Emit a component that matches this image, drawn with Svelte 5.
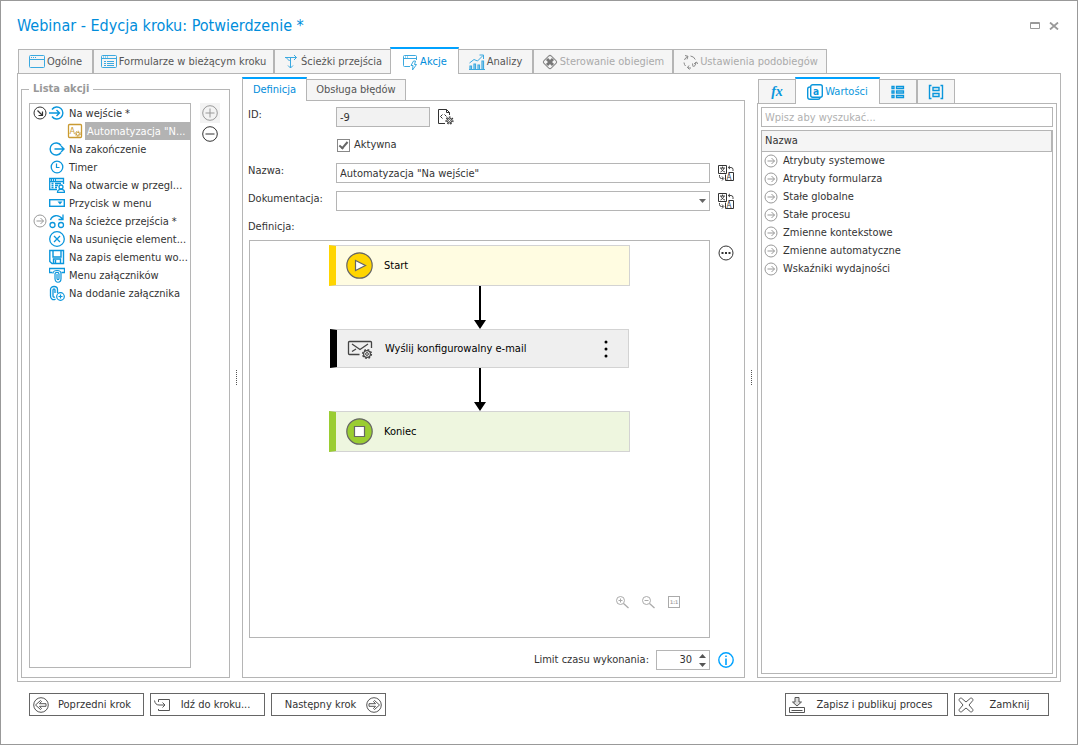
<script lang="ts">
  type Tab = { label: string; icon: string; width: number; active?: boolean; disabled?: boolean };
  type Action = { label: string; icon: string; expand?: string; child?: boolean };

  const tabs: Tab[] = [
    { label: 'Ogólne', icon: 'window', width: 75 },
    { label: 'Formularze w bieżącym kroku', icon: 'form', width: 181 },
    { label: 'Ścieżki przejścia', icon: 'paths', width: 117 },
    { label: 'Akcje', icon: 'action', width: 69, active: true },
    { label: 'Analizy', icon: 'chart', width: 75 },
    { label: 'Sterowanie obiegiem', icon: 'flow', width: 140, disabled: true },
    { label: 'Ustawienia podobiegów', icon: 'cycle', width: 154, disabled: true },
  ];

  const actions: Action[] = [
    { label: 'Na wejście *', icon: 'enter', expand: 'open' },
    { label: 'Automatyzacja "N...', icon: 'automation', child: true },
    { label: 'Na zakończenie', icon: 'exit' },
    { label: 'Timer', icon: 'timer' },
    { label: 'Na otwarcie w przegl...', icon: 'browser' },
    { label: 'Przycisk w menu', icon: 'menu' },
    { label: 'Na ścieżce przejścia *', icon: 'path', expand: 'closed' },
    { label: 'Na usunięcie element...', icon: 'remove' },
    { label: 'Na zapis elementu wo...', icon: 'save' },
    { label: 'Menu załączników', icon: 'clip' },
    { label: 'Na dodanie załącznika', icon: 'clipadd' },
  ];

  const values = [
    'Atrybuty systemowe',
    'Atrybuty formularza',
    'Stałe globalne',
    'Stałe procesu',
    'Zmienne kontekstowe',
    'Zmienne automatyczne',
    'Wskaźniki wydajności',
  ];

  let selected = $state(1);
  let enabled = $state(true);
  let name = $state('Automatyzacja "Na wejście"');
  let limit = $state(30);
  let search = $state('');
</script>

{#snippet gear(cx: number, cy: number, r: number)}
  <circle {cx} {cy} {r} fill="#fff" stroke-width="1" />
  <circle {cx} {cy} r={r + 1} fill="none" stroke-width="1.2" stroke-dasharray="1.6 1.5" />
  <circle {cx} {cy} r="1" fill="none" stroke-width=".8" />
{/snippet}

{#snippet icon(kind: string)}
  <svg class="icon" viewBox="0 0 16 16" fill="none" stroke="currentColor" aria-hidden="true">
    {#if kind === 'window'}
      <rect x=".5" y="1.5" width="15" height="12" rx="1" />
      <path d="M1 5.5h14M2 3.5h1M4 3.5h1M6 3.5h1" />
    {:else if kind === 'form'}
      <rect x=".5" y="1.5" width="15" height="12" rx="1" />
      <path d="M1 4.5h14M2 3h1M4 3h1M6 3h1M3 7.5h2M3 9.5h2M3 11.5h2M6 7.5h7M6 9.5h7M6 11.5h7" />
    {:else if kind === 'paths'}
      <path d="M2 3.5h11.5M11 1l2.500 2.5L11 6M2 3.5c1.500 0 2 .5 2.500 1.500S6 6.500 7.500 6.500M7.500 3.500v10.500M5 11.500L7.500 14l2.500-2.500" />
    {:else if kind === 'action'}
      <path d="M8 12.500H2.500a1 1 0 0 1-1-1v-9a1 1 0 0 1 1-1h11a1 1 0 0 1 1 1V6M2 4.500h12M3 3h1M5 3h1" />
      <path d="M11.500 7L9 11.500h2L10.500 16l4-5.500h-2l1-3.500z" />
    {:else if kind === 'chart'}
      <path d="M1 16v-4h1.500v4M5 16v-6h1.500v6M9 16v-5h1.500v5M13 16V7h1.500v9M0 15.500h16" stroke-width="1.2" />
      <path d="M.5 9L5 5.500l3.500 1.500L14 1.500M10.500 1h4v4" />
    {:else if kind === 'flow'}
      <rect x="2.800" y="2.800" width="10.400" height="10.400" rx="2" transform="rotate(45 8 8)" />
      <path d="M5 5l6 6M11 5l-6 6" stroke="#777" stroke-width="3" />
    {:else if kind === 'cycle'}
      <path d="M2.500 6a6 6 0 0 1 3-3.500M8.500 2a6 6 0 0 1 4.800 3.500M14 8a6 6 0 0 1-2.500 5M9 14a6 6 0 0 1-3.500-.5M3.500 12A6 6 0 0 1 2 8.500" />
      <path d="M3 1.500l3 .8-1 3M11 12.500l-.5-3M12 10l2.500-2 1.500 2M7 11.500l-1.500 2 2 2" />
    {:else if kind === 'enter'}
      <path d="M3 4.500a6 6 0 1 1 0 7M0 8h10.500M7.500 5l3 3-3 3" stroke-width="1.400" />
    {:else if kind === 'exit'}
      <path d="M12 4.500a6 6 0 1 0 0 7M5.500 8H15M12 5l3 3-3 3" stroke-width="1.400" />
    {:else if kind === 'automation'}
      <rect x="1.500" y="1.500" width="13" height="13" rx="1" stroke-width="1.300" />
      <text x="2.500" y="11" font-size="9" fill="currentColor" stroke="none">A</text>
      <circle cx="10.800" cy="10.800" r="1.600" />
      <circle cx="10.800" cy="10.800" r="2.600" stroke-dasharray="1.100 .95" />
    {:else if kind === 'timer'}
      <circle cx="8" cy="8" r="5.800" stroke-width="1.300" />
      <path d="M7.500 4.500v4h3" stroke-width="1.200" />
    {:else if kind === 'browser'}
      <path d="M8 12.500H.7v-11h13.800V7M.7 4.500h13.800M2 3h1M4 3h1M6 3h1M2.500 6.500h2M6 6.500h6M2.500 8.500h2M6 8.500h3M2.500 10.500h2M6 10.500h2" stroke-width="1.300" />
      <circle cx="12" cy="10" r="2" stroke-width="1.300" />
      <path d="M8.500 15.300c0-2 1.500-3 3.500-3s3.500 1 3.500 3z" stroke-width="1.300" />
    {:else if kind === 'menu'}
      <rect x=".7" y="4.700" width="14.600" height="6.600" stroke-width="1.400" />
      <path d="M8.500 6.500h5L11 9.500z" fill="currentColor" stroke="none" />
    {:else if kind === 'path'}
      <circle cx="3.500" cy="12" r="2.500" stroke-width="1.300" />
      <circle cx="12" cy="12" r="2.500" stroke-width="1.300" />
      <path d="M1.500 7C3 2 9.500 1 13.500 6M14 1.500v5H9.500" stroke-width="1.300" />
    {:else if kind === 'remove'}
      <circle cx="8" cy="8" r="7.300" stroke-width="1.300" />
      <path d="M5 5l6 6M11 5l-6 6" stroke-width="1.300" />
    {:else if kind === 'save'}
      <path d="M.8 1.500h13.700v13H3l-2.200-2zM4 1.500v6.500h8V1.500M4.500 14v-4h7v4M6.500 11v3" stroke-width="1.400" />
    {:else if kind === 'clip'}
      <path d="M3.500 5.500h-3v-4h15v4h-3" stroke-width="1.300" />
      <path d="M4 6.500c0-4 8-4 8 0v5c0 5-6 5-6 0V7c0-2.200 4-2.200 4 0v4.500c0 1.500-2 1.500-2 0V7" stroke-width="1.200" />
    {:else if kind === 'clipadd'}
      <path d="M1.500 11V4.500c0-4 7-4 7 0V8M6.500 14c-2 1.500-5 .5-5-3M6 8V5c0-1.500-2-1.500-2 0v6c0 1 1 1.500 2 1" stroke-width="1.300" />
      <circle cx="11.500" cy="11.500" r="3.800" stroke-width="1.200" />
      <path d="M11.500 9.500v4M9.500 11.500h4" stroke-width="1.200" />
    {:else if kind === 'open'}
      <circle cx="8" cy="8" r="6" />
      <path d="M5.500 5.500l4.500 4.500M10.500 6.500v4h-4" stroke-width="1.200" />
    {:else if kind === 'closed'}
      <circle cx="8" cy="8" r="6" />
      <path d="M4.500 8h7M8.500 5l3 3-3 3" />
    {:else if kind === 'plus'}
      <circle cx="8" cy="8" r="7.300" />
      <path d="M3.500 8h9M8 3.500v9" />
    {:else if kind === 'minus'}
      <circle cx="8" cy="8" r="7.300" />
      <path d="M3.500 8h9" />
    {:else if kind === 'script'}
      <path d="M7 14.500H.5V.5h8l3 3V6M8.500.5v3h3M4.500 5.500l-2 2 2 2M6.500 5.500l2 2" />
      {@render gear(11.5, 11.5, 2.5)}
    {:else if kind === 'translate'}
      <path d="M.5.5h8v8h-8zM10.500 7.500h5v8h-8v-6" />
      <path d="M2 3h5M4.500 1.500V3M2.500 7c2-1 3.200-2.500 3.500-4M3 3c.5 2 2 3.500 4 4" stroke-width=".9" />
      <text x="8.500" y="14.500" font-size="8" fill="currentColor" stroke="none">A</text>
      <path d="M10.500 2.500h2.500a2 2 0 0 1 2 2V6M12 .8l-1.800 1.700L12 4M1.500 10v1.500a2 2 0 0 0 2 2H5M4 11.500l1.800 2L4 15.500" stroke-width=".9" />
    {:else if kind === 'more'}
      <circle cx="8" cy="8" r="7" />
      <path d="M3.500 8h2M7 8h2M10.500 8h2" stroke-width="2" />
    {:else if kind === 'zoomin' || kind === 'zoomout'}
      <circle cx="6.500" cy="6.500" r="4" />
      <path d="M9.500 9.500l5 4.500" stroke-width="1.300" />
      <path d="M4.500 6.500h4" />
      {#if kind === 'zoomin'}<path d="M6.500 4.500v4" />{/if}
    {:else if kind === 'actual'}
      <rect x="2.500" y="2.500" width="11" height="11" />
      <text x="4" y="10" font-size="5" font-weight="bold" fill="currentColor" stroke="none">1:1</text>
    {:else if kind === 'info'}
      <circle cx="8" cy="8" r="7.200" stroke-width="1.400" />
      <path d="M8 6.500V13M8 3.500V5" stroke-width="1.600" />
    {:else if kind === 'values'}
      <rect x="3.700" y=".7" width="11.600" height="12.600" rx="2" stroke-width="1.400" />
      <path d="M3 3c-1.500 0-2.300 1-2.300 2v8c0 1.500 1 2.300 2.300 2.300h8c1 0 2-.5 2-2" stroke-width="1.400" />
      <text x="6" y="10.500" font-size="10" font-weight="bold" fill="currentColor" stroke="none">a</text>
    {:else if kind === 'list'}
      <path d="M2 2.500h2v2H2zM2 7h2v2H2zM2 11.500h2v2H2zM6.500 2.500h7v2h-7zM6.500 7h7v2h-7zM6.500 11.500h7v2h-7z" stroke-width="1.300" />
    {:else if kind === 'block'}
      <path d="M3.500 1.500h-2v13h2M12.500 1.500h2v13h-2M5 3.500h6v3H5zM5 9.500h6v3H5z" stroke-width="1.400" />
    {:else if kind === 'prev' || kind === 'next'}
      <g transform={kind === 'next' ? 'matrix(-1 0 0 1 16 0)' : undefined}>
        <circle cx="8" cy="8" r="7.300" />
        <path d="M2.500 8l5-4.500 1 1L6.500 6.700H13v2.600H6.500l2 2.200-1 1z" />
      </g>
    {:else if kind === 'goto'}
      <path d="M4.500 5V2.500h11v11h-11V12M.5 3.500c.5 3 2 4.500 4.500 4.500h6M8.500 5.500L11 8l-2.500 2.500" />
    {:else if kind === 'publish'}
      <path d="M6 .5h4V5h2.500L8 9 3.500 5H6z" fill="#ddd" />
      <path d="M.5 10.500h15v5H.5zM2.500 13.500h11" />
    {:else if kind === 'close'}
      <path d="M3.500 1.200L8 5l4.500-3.800c1.500-.5 2.800.8 2.300 2.300L11 8l3.800 4.500c.5 1.500-.8 2.800-2.300 2.300L8 11l-4.500 3.800c-1.500.5-2.800-.8-2.300-2.300L5 8 1.200 3.500C.7 2 2 .7 3.500 1.200z" />
    {/if}
  </svg>
{/snippet}

{#snippet arrow()}
  <svg class="arrow" viewBox="0 0 12 43" aria-hidden="true">
    <path d="M5 0h2v34h5l-6 9-6-9h5z" />
  </svg>
{/snippet}

<main class="window">
  <header class="titlebar">
    <h1>Webinar - Edycja kroku: Potwierdzenie *</h1>
    <div class="window-buttons">
      <button aria-label="Maksymalizuj">
        <svg width="10" height="8" viewBox="0 0 10 8" fill="none" stroke="currentColor"><path d="M.5.5h9v6h-9zM0 1.500h10" /></svg>
      </button>
      <button aria-label="Zamknij okno">
        <svg width="10" height="8" viewBox="0 0 10 8" fill="none" stroke="currentColor" stroke-width="1.800"><path d="M1 .5l8 7M9 .5l-8 7" /></svg>
      </button>
    </div>
  </header>

  <nav class="tabs main-tabs">
    {#each tabs as tab}
      <button class="tab" class:active={tab.active} disabled={tab.disabled} style:width="{tab.width}px">
        {@render icon(tab.icon)}
        <span>{tab.label}</span>
      </button>
    {/each}
  </nav>

  <div class="workspace">
    <fieldset class="group">
      <legend>Lista akcji</legend>
      <ul class="actions">
        {#each actions as action, i}
          <li class:child={action.child}>
            <span class="expander" class:dark={action.expand === 'open'}>
              {#if action.expand}{@render icon(action.expand)}{/if}
            </span>
            <button class="action" class:selected={selected === i} onclick={() => (selected = i)}>
              {@render icon(action.icon)}
              <span class="action-label">{action.label}</span>
            </button>
          </li>
        {/each}
      </ul>
      <div class="group-buttons">
        <button class="tool off" aria-label="Dodaj">{@render icon('plus')}</button>
        <button class="tool" aria-label="Usuń">{@render icon('minus')}</button>
      </div>
    </fieldset>

    <div class="splitter"></div>

    <section class="column">
      <nav class="tabs center-tabs">
        <button class="tab active">Definicja</button>
        <button class="tab">Obsługa błędów</button>
      </nav>
      <div class="panel form">
        <label for="id">ID:</label>
        <div class="id-row">
          <input id="id" class="field" value="-9" readonly />
          <button class="tool" aria-label="Szczegóły">{@render icon('script')}</button>
        </div>

        <label class="check">
          <input type="checkbox" bind:checked={enabled} />
          Aktywna
        </label>

        <label for="name">Nazwa:</label>
        <input id="name" class="field" bind:value={name} />
        <button class="tool" aria-label="Tłumaczenia nazwy">{@render icon('translate')}</button>

        <label for="docs">Dokumentacja:</label>
        <div class="combo">
          <select id="docs" class="field"><option></option></select>
          <svg class="caret" viewBox="0 0 7 4" aria-hidden="true"><path d="M0 0h7L3.500 4z" fill="currentColor" /></svg>
        </div>
        <button class="tool" aria-label="Tłumaczenia dokumentacji">{@render icon('translate')}</button>

        <h2>Definicja:</h2>

        <div class="canvas">
          <div class="node start">
            <svg class="node-icon" viewBox="0 0 27 27">
              <circle cx="13.500" cy="13.500" r="12.700" fill="#ffd500" stroke="#666" stroke-width="1.200" />
              <path d="M9.500 8.500v10l10-5z" fill="#fff" stroke="#666" stroke-width="1.200" />
            </svg>
            <span>Start</span>
          </div>
          {@render arrow()}
          <div class="node step">
            <svg class="node-icon" viewBox="0 0 27 27" fill="none" stroke="#444">
              <path d="M12.500 19.500h-10a1 1 0 0 1-1-1V7.500a1 1 0 0 1 1-1h21a1 1 0 0 1 1 1V13M5 9l8 5.500L21 9M5 16.500l4-2.500" stroke-width="1.300" />
              <circle cx="20" cy="19" r="3.400" fill="#eee" stroke-width="1.200" />
              <circle cx="20" cy="19" r="4.400" stroke-width="1.400" stroke-dasharray="1.800 1.650" />
              <circle cx="20" cy="19" r="1.400" />
            </svg>
            <span>Wyślij konfigurowalny e-mail</span>
            <button class="dots" aria-label="Menu akcji">
              <svg width="4" height="20" viewBox="0 0 4 20"><circle cx="2" cy="3" r="1.500" /><circle cx="2" cy="10" r="1.500" /><circle cx="2" cy="17" r="1.500" /></svg>
            </button>
          </div>
          {@render arrow()}
          <div class="node end">
            <svg class="node-icon" viewBox="0 0 27 27">
              <circle cx="13.500" cy="13.500" r="12.700" fill="#9acd32" stroke="#666" stroke-width="1.200" />
              <path d="M8.500 8.500h10v10h-10z" fill="#fff" stroke="#666" stroke-width="1.200" />
            </svg>
            <span>Koniec</span>
          </div>
          <div class="zoom">
            <button class="tool" aria-label="Powiększ">{@render icon('zoomin')}</button>
            <button class="tool" aria-label="Pomniejsz">{@render icon('zoomout')}</button>
            <button class="tool" aria-label="Rozmiar rzeczywisty">{@render icon('actual')}</button>
          </div>
        </div>
        <button class="tool" aria-label="Więcej">{@render icon('more')}</button>

        <div class="limit">
          <label for="limit">Limit czasu wykonania:</label>
          <div class="spin">
            <input id="limit" inputmode="numeric" bind:value={limit} />
            <div class="spin-buttons">
              <button aria-label="Zwiększ" onclick={() => (limit += 1)}>
                <svg width="7" height="4" viewBox="0 0 7 4"><path d="M0 4h7L3.500 0z" fill="currentColor" /></svg>
              </button>
              <button aria-label="Zmniejsz" onclick={() => (limit -= 1)}>
                <svg width="7" height="4" viewBox="0 0 7 4"><path d="M0 0h7L3.500 4z" fill="currentColor" /></svg>
              </button>
            </div>
          </div>
        </div>
        <button class="tool info" aria-label="Informacja">{@render icon('info')}</button>
      </div>
    </section>

    <div class="splitter"></div>

    <aside class="column">
      <nav class="tabs side-tabs">
        <button class="tab"><span class="fx">fx</span></button>
        <button class="tab active">{@render icon('values')}<span>Wartości</span></button>
        <button class="tab" aria-label="Lista">{@render icon('list')}</button>
        <button class="tab" aria-label="Bloki">{@render icon('block')}</button>
      </nav>
      <div class="panel values">
        <input class="field" type="text" placeholder="Wpisz aby wyszukać..." aria-label="Szukaj" bind:value={search} />
        <div class="tree">
          <table>
            <thead>
              <tr><th>Nazwa</th></tr>
            </thead>
            <tbody>
              {#each values as value}
                <tr>
                  <td><div class="cell">{@render icon('closed')}<span>{value}</span></div></td>
                </tr>
              {/each}
            </tbody>
          </table>
        </div>
      </div>
    </aside>
  </div>

  <footer class="footer">
    <button class="push">{@render icon('prev')}<span>Poprzedni krok</span></button>
    <button class="push">{@render icon('goto')}<span>Idź do kroku...</span></button>
    <button class="push"><span>Następny krok</span>{@render icon('next')}</button>
    <button class="push publish">{@render icon('publish')}<span>Zapisz i publikuj proces</span></button>
    <button class="push close">{@render icon('close')}<span>Zamknij</span></button>
  </footer>
</main>

<style>
  :global(body) {
    background: #fff;
  }

  .window {
    --line: #b5b5b5;
    --blue: #0a96dc;
    --accent: #00a2ff;
    --ink: #333;
    box-sizing: border-box;
    min-height: 100vh;
    display: flex;
    flex-direction: column;
    padding: 0 16px 28px;
    border: 1px solid #999;
    color: var(--ink);
    font: 11px/16px "DejaVu Sans Condensed", "DejaVu Sans", sans-serif;
  }

  .window :is(button, input, select) {
    box-sizing: border-box;
    margin: 0;
    padding: 0;
    border: 0;
    border-radius: 0;
    background: none;
    color: inherit;
    font: inherit;
  }

  svg {
    display: block;
  }

  .icon {
    flex: none;
    width: 16px;
    height: 16px;
  }

  .titlebar {
    box-sizing: border-box;
    display: flex;
    justify-content: space-between;
    align-items: center;
    height: 46px;
    padding-top: 4px;
  }

  h1 {
    margin: 0;
    color: #008ddb;
    font-size: 16px;
    font-weight: normal;
    line-height: 20px;
  }

  .window-buttons {
    display: flex;
    gap: 9px;
    padding-right: 2px;
    color: #999;
  }

  .tabs {
    display: flex;
    align-items: flex-end;
    position: relative;
    z-index: 1;
  }

  .window .tab {
    display: flex;
    align-items: center;
    justify-content: center;
    gap: 2px;
    height: 25px;
    border: 1px solid var(--line);
    background: #f5f5f5;
    color: #555;
    white-space: nowrap;
  }

  .window .tab.active {
    height: 27px;
    margin: 0 -1px;
    border-top: 2px solid var(--accent);
    border-bottom: 0;
    background: #fff;
    color: #008ddb;
    z-index: 1;
  }

  .window .tab:disabled {
    color: #aaa;
  }

  .main-tabs {
    padding-left: 1px;
  }

  .main-tabs .icon {
    color: #3ba9e0;
  }

  .main-tabs .tab:disabled .icon {
    color: #888;
  }

  .workspace {
    flex: 1;
    display: grid;
    grid-template-columns: 209px 12px minmax(0, 1fr) 12px 300px;
    margin-top: -1px;
    padding: 3px;
    border: 1px solid var(--line);
  }

  .group {
    display: flex;
    gap: 9px;
    min-width: 0;
    margin: 4px 0 0;
    padding: 6px 9px 9px 7px;
    border: 1px solid var(--line);
  }

  legend {
    padding: 0 4px;
    color: #999;
    font-weight: bold;
  }

  .actions {
    flex: 1;
    min-width: 0;
    margin: 0;
    padding: 0;
    border: 1px solid var(--line);
    list-style: none;
  }

  li {
    display: flex;
    height: 18px;
    padding-left: 2px;
  }

  li.child {
    padding-left: 20px;
  }

  .expander {
    flex: none;
    display: flex;
    align-items: center;
    width: 17px;
    color: #999;
  }

  .expander.dark {
    color: #333;
  }

  .window .action {
    flex: 1;
    min-width: 0;
    display: flex;
    align-items: center;
    gap: 2px;
    text-align: left;
  }

  .action .icon {
    color: var(--blue);
  }

  .child .icon {
    color: #c99a33;
  }

  .action-label {
    flex: 1;
    min-width: 0;
    padding: 2px 0 0 2px;
    overflow: hidden;
    white-space: nowrap;
  }

  .selected .action-label {
    background: #b3b3b3;
    color: #fff;
  }

  .group-buttons {
    display: flex;
    flex-direction: column;
    gap: 1px;
  }

  .window .tool {
    display: grid;
    place-items: center;
    width: 16px;
    height: 20px;
  }

  .window .group-buttons .tool {
    width: 20px;
  }

  .window .tool.off {
    background: #f3f3f3;
    color: #999;
  }

  .splitter {
    align-self: center;
    justify-self: center;
    height: 15px;
    border-left: 1px dotted #555;
  }

  .column {
    display: flex;
    flex-direction: column;
    min-width: 0;
  }

  .panel {
    flex: 1;
    margin-top: -1px;
    border: 1px solid var(--line);
  }

  .window .center-tabs .tab {
    width: 100px;
    height: 22px;
  }

  .window .center-tabs .active {
    width: 65px;
    height: 24px;
    margin-left: 0;
  }

  .window .field {
    width: 100%;
    height: 20px;
    padding: 0 3px;
    border: 1px solid var(--line);
    background: #fff;
  }

  .form {
    display: grid;
    grid-template-columns: 80px minmax(0, 1fr) 16px;
    grid-template-rows: 20px 20px 20px 20px 16px minmax(0, 1fr) 20px;
    column-gap: 8px;
    row-gap: 8px;
    padding: 6px 10px 7px 5px;
  }

  .id-row {
    grid-column: 2 / 4;
    display: flex;
    gap: 8px;
  }

  .window .id-row .field {
    width: 94px;
    background: #f2f2f2;
  }

  .check {
    grid-column: 2 / 4;
    display: flex;
    align-items: center;
    gap: 4px;
  }

  .window .check input {
    appearance: none;
    display: grid;
    place-items: center;
    width: 13px;
    height: 13px;
    margin-left: 1px;
    border: 1px solid #888;
  }

  .check input:checked::after {
    content: "";
    width: 3px;
    height: 7px;
    margin-bottom: 2px;
    border: solid #666;
    border-width: 0 2px 2px 0;
    transform: rotate(40deg);
  }

  .combo {
    position: relative;
  }

  .combo select {
    appearance: none;
    display: block;
  }

  .caret {
    position: absolute;
    top: 8px;
    right: 4px;
    width: 7px;
    height: 4px;
    color: #666;
    pointer-events: none;
  }

  h2 {
    grid-column: 1 / 4;
    margin: 0;
    font-size: 11px;
    font-weight: normal;
  }

  .canvas {
    grid-column: 1 / 3;
    display: flex;
    flex-direction: column;
    align-items: center;
    margin: -3px 0 4px 1px;
    padding-top: 4px;
    border: 1px solid var(--line);
  }

  .node {
    box-sizing: border-box;
    display: flex;
    align-items: center;
    gap: 11px;
    width: 301px;
    height: 41px;
    padding-left: 10px;
    border: 1px solid #d3d3d3;
    border-left-width: 7px;
    color: #000;
  }

  .start {
    border-left-color: #ffd500;
    background: #fffce1;
  }

  .step {
    width: 299px;
    height: 39px;
    border-left-color: #000;
    background: #efefef;
  }

  .end {
    border-left-color: #9acd32;
    background: #eef6df;
  }

  .node-icon {
    width: 27px;
    height: 27px;
  }

  .window .dots {
    margin-left: auto;
    padding: 0 20px;
  }

  .arrow {
    width: 12px;
    height: 43px;
  }

  .zoom {
    align-self: flex-end;
    display: flex;
    gap: 10px;
    margin-top: auto;
    padding: 0 27px 25px;
    color: #aaa;
  }

  .limit {
    grid-column: 1 / 3;
    display: flex;
    justify-content: flex-end;
    align-items: center;
    gap: 7px;
  }

  .spin {
    box-sizing: border-box;
    display: flex;
    width: 54px;
    height: 20px;
    border: 1px solid var(--line);
  }

  .spin input {
    flex: 1;
    min-width: 0;
    text-align: right;
  }

  .spin-buttons {
    display: flex;
    flex-direction: column;
    justify-content: center;
    gap: 5px;
    padding: 0 3px 0 7px;
    color: #555;
  }

  .window .info {
    color: var(--accent);
  }

  .side-tabs {
    padding-left: 1px;
  }

  .window .side-tabs .tab {
    width: 38px;
    color: var(--blue);
  }

  .window .side-tabs .active {
    width: 85px;
  }

  .fx {
    font: italic bold 14px/20px "Liberation Serif", serif;
  }

  .values {
    display: flex;
    flex-direction: column;
    gap: 3px;
    padding: 3px;
  }

  .values ::placeholder {
    color: #b0b0b0;
    opacity: 1;
  }

  .tree {
    flex: 1;
    border: 1px solid var(--line);
  }

  table {
    width: 100%;
    border-collapse: collapse;
  }

  th {
    height: 20px;
    padding: 0 3px;
    border: solid var(--line);
    border-width: 0 1px 1px 0;
    background: #f5f5f5;
    font-weight: normal;
    text-align: left;
  }

  td {
    height: 18px;
    padding: 0;
  }

  .cell {
    display: flex;
    align-items: center;
    gap: 4px;
    padding-left: 1px;
  }

  .cell .icon {
    color: #999;
  }

  .footer {
    display: flex;
    gap: 6px;
    margin-top: 11px;
    padding: 0 12px;
  }

  .window .push {
    display: flex;
    align-items: center;
    width: 115px;
    height: 23px;
    padding: 0 3px;
    border: 1px solid #666;
    background: #fff;
    white-space: nowrap;
  }

  .push span {
    flex: 1;
    text-align: center;
  }

  .push .icon {
    color: #555;
  }

  .window .publish {
    width: 163px;
    margin-left: auto;
  }

  .window .close {
    width: 95px;
  }
</style>
